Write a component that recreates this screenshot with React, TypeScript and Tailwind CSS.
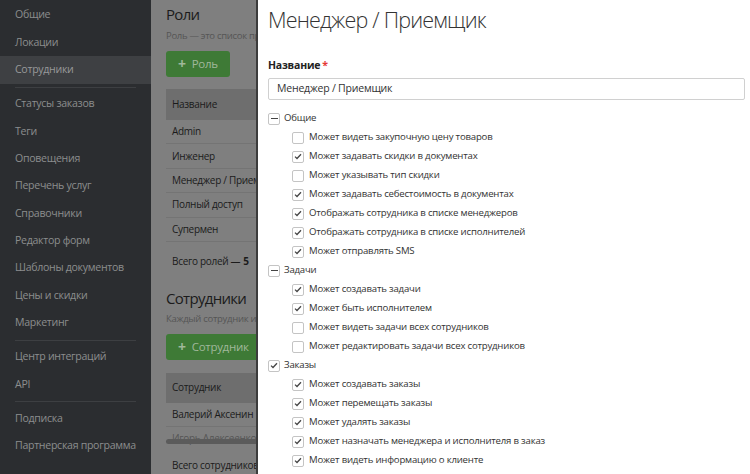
import React from "react";

const font = { fontFamily: '"Open Sans", "Noto Sans", sans-serif' };

type Nav = { label: string; active?: boolean } | "divider";

const nav: Nav[] = [
  { label: "Общие" },
  { label: "Локации" },
  { label: "Сотрудники", active: true },
  "divider",
  { label: "Статусы заказов" },
  { label: "Теги" },
  { label: "Оповещения" },
  { label: "Перечень услуг" },
  { label: "Справочники" },
  { label: "Редактор форм" },
  { label: "Шаблоны документов" },
  { label: "Цены и скидки" },
  { label: "Маркетинг" },
  "divider",
  { label: "Центр интеграций" },
  { label: "API" },
  "divider",
  { label: "Подписка" },
  { label: "Партнерская программа" },
];

type Perm = { label: string; on: boolean };
type Group = { title: string; state: "on" | "partial"; items: Perm[] };

const groups: Group[] = [
  {
    title: "Общие",
    state: "partial",
    items: [
      { label: "Может видеть закупочную цену товаров", on: false },
      { label: "Может задавать скидки в документах", on: true },
      { label: "Может указывать тип скидки", on: false },
      { label: "Может задавать себестоимость в документах", on: true },
      { label: "Отображать сотрудника в списке менеджеров", on: true },
      { label: "Отображать сотрудника в списке исполнителей", on: true },
      { label: "Может отправлять SMS", on: true },
    ],
  },
  {
    title: "Задачи",
    state: "partial",
    items: [
      { label: "Может создавать задачи", on: true },
      { label: "Может быть исполнителем", on: true },
      { label: "Может видеть задачи всех сотрудников", on: false },
      { label: "Может редактировать задачи всех сотрудников", on: false },
    ],
  },
  {
    title: "Заказы",
    state: "on",
    items: [
      { label: "Может создавать заказы", on: true },
      { label: "Может перемещать заказы", on: true },
      { label: "Может удалять заказы", on: true },
      { label: "Может назначать менеджера и исполнителя в заказ", on: true },
      { label: "Может видеть информацию о клиенте", on: true },
      { label: "Может видеть все заказы", on: true },
    ],
  },
];

function Box({ state }: { state: "on" | "off" | "partial" }) {
  return (
    <span className="grid h-[12px] w-[12px] shrink-0 place-items-center rounded-[2px] border border-[#c4c4c4] bg-white">
      {state === "on" && (
        <svg width="8" height="7" viewBox="0 0 8 7" fill="none">
          <path d="M1 3.6 L3 5.5 L7 1.2" stroke="#444" strokeWidth="1.3" />
        </svg>
      )}
      {state === "partial" && <span className="h-[1.5px] w-[7px] bg-[#444]" />}
    </span>
  );
}

function Sidebar() {
  return (
    <aside className="flex w-[151px] shrink-0 flex-col whitespace-nowrap bg-[#2b2d30] pt-[1.5px] text-[10.6px] tracking-[-0.3px] text-[#8c8d8e]">
      {nav.map((n, i) =>
        n === "divider" ? (
          <div key={i} className="mx-[15px] my-[3px] border-t border-[#3d3f42]" />
        ) : (
          <div key={i} className={"flex h-[27.35px] items-center px-[15px] " + (n.active ? "bg-[#3e4043] text-[#98999a]" : "")}>
            {n.label}
          </div>
        )
      )}
    </aside>
  );
}

function Main() {
  const roles = ["Admin", "Инженер", "Менеджер / Приемщик", "Полный доступ", "Супермен"];
  return (
    <main className="w-[105px] shrink-0 overflow-hidden bg-[#7f7f7f] pl-[15px] text-[#1b1b1b]">
      <div className="w-[400px] whitespace-nowrap tracking-[-0.3px]">
        <h2 className="mt-[2px] text-[15px] leading-[24px] tracking-[-0.7px]">Роли</h2>
        <p className="mt-[3px] text-[9.5px] leading-[14px] text-[#555]">Роль — это список прав доступа к разделам системы</p>
        <button className="mt-[8px] flex h-[26px] items-center gap-[6px] rounded-[3px] bg-[#3e7a36] px-[12px] text-[11.5px] text-[#a0b89b]">
          <span className="text-[14px] font-bold leading-none">+</span>Роль
        </button>
        <div className="mt-[12px] flex h-[31px] items-center bg-[#6e6e6e] px-[6px] text-[10px]">Название</div>
        {roles.map((r) => (
          <div key={r} className="flex h-[24.4px] items-center border-b border-[#747474] px-[6px] text-[10px]">{r}</div>
        ))}
        <div className="flex h-[40px] items-center px-[6px] text-[10px]">
          Всего ролей — <b className="ml-[3px]">5</b>
        </div>
        <h2 className="mt-[4px] text-[15px] leading-[24px] tracking-[-0.7px]">Сотрудники</h2>
        <p className="mt-[2px] text-[9.5px] leading-[14px] text-[#555]">Каждый сотрудник имеет свою роль</p>
        <button className="mt-[8px] flex h-[26px] items-center gap-[6px] rounded-[3px] bg-[#3e7a36] px-[12px] text-[11.5px] text-[#a0b89b]">
          <span className="text-[14px] font-bold leading-none">+</span>Сотрудник
        </button>
        <div className="mt-[13px] flex h-[30px] items-center bg-[#6e6e6e] px-[6px] text-[10px]">Сотрудник</div>
        <div className="flex h-[24px] items-center border-b border-[#747474] px-[6px] text-[10px]">Валерий Аксенин</div>
        <div className="relative flex h-[24px] items-center px-[6px] text-[10px] text-[#555]">
          Игорь Алексеенко
          <span className="absolute left-0 top-[12px] h-[5px] w-[300px] rounded-full bg-[#5b5b5b]" />
        </div>
        <div className="flex h-[28px] items-center px-[6px] pt-[2px] text-[10px]">Всего сотрудников — 2</div>
      </div>
    </main>
  );
}

function Panel() {
  return (
    <section className="flex-1 overflow-hidden border-l-2 border-[#3c3c3c] bg-white pl-[10px] pr-[5px] text-[#333]">
      <h1 className="mt-[2px] whitespace-nowrap text-[21.5px] font-light leading-[36px] tracking-[-0.8px] text-[#333]">Менеджер / Приемщик</h1>
      <label className="mt-[20px] block text-[10.5px] font-bold leading-[14px] tracking-[-0.2px] text-[#222]">
        Название<span className="ml-[2px] text-[#e53935]">*</span>
      </label>
      <div className="mt-[6px] flex h-[22px] items-center rounded-[2px] border border-[#d0d0d0] px-[8px] text-[10.5px] tracking-[-0.2px] text-[#333]">
        Менеджер / Приемщик
      </div>
      <div className="mt-[9px] whitespace-nowrap text-[9.6px] tracking-[-0.2px]">
        {groups.map((g) => (
          <div key={g.title}>
            <div className="flex h-[19px] items-center gap-[4px]">
              <Box state={g.state} />
              <span>{g.title}</span>
            </div>
            {g.items.map((p) => (
              <div key={p.label} className="flex h-[19px] items-center gap-[5px] pl-[24px]">
                <Box state={p.on ? "on" : "off"} />
                <span>{p.label}</span>
              </div>
            ))}
          </div>
        ))}
      </div>
    </section>
  );
}

export default function App() {
  return (
    <div className="flex h-[474px] w-[750px] overflow-hidden" style={font}>
      <Sidebar />
      <Main />
      <Panel />
    </div>
  );
}
